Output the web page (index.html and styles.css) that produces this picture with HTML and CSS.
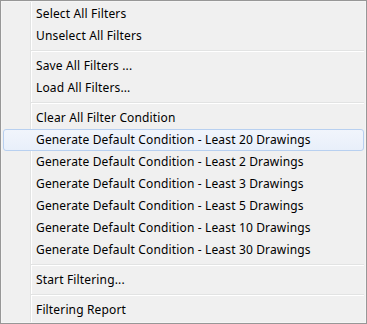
FILE: index.html
```html
<!DOCTYPE html>
<html lang="en">
<head>
  <meta charset="UTF-8">
  <title>Filter Menu</title>
  <link rel="stylesheet" href="styles.css">
</head>
<body>
  <div class="menu">
    <div class="menu-item">Select All Filters</div>
    <div class="menu-item">Unselect All Filters</div>
    <div class="menu-sep"></div>
    <div class="menu-item">Save All Filters ...</div>
    <div class="menu-item">Load All Filters...</div>
    <div class="menu-sep"></div>
    <div class="menu-item">Clear All Filter Condition</div>
    <div class="menu-item hover">Generate Default Condition - Least 20 Drawings</div>
    <div class="menu-item">Generate Default Condition - Least 2 Drawings</div>
    <div class="menu-item">Generate Default Condition - Least 3 Drawings</div>
    <div class="menu-item">Generate Default Condition - Least 5 Drawings</div>
    <div class="menu-item">Generate Default Condition - Least 10 Drawings</div>
    <div class="menu-item">Generate Default Condition - Least 30 Drawings</div>
    <div class="menu-sep"></div>
    <div class="menu-item">Start Filtering...</div>
    <div class="menu-sep"></div>
    <div class="menu-item">Filtering Report</div>
  </div>
</body>
</html>
```

FILE: styles.css
```css
  :root {
    --menu-bg: #F0F0F0;
    --menu-border: #979797;
    --line-dark: #E2E3E3;
    --text-base: #000000;
  }
  * {
    box-sizing: border-box;
  }
  html, body {
    margin: 0;
    padding: 0;
  }
  body {
    font-family: "Noto Sans", "Open Sans", sans-serif;
    font-size: 12px;
    letter-spacing: 0.15px;
    color: var(--text-base);
  }
  .menu {
    width: 367px;
    height: 324px;
    border: 1px solid var(--menu-border);
    padding: 2px;
    background-color: var(--menu-bg);
    background-image: linear-gradient(to right,
      transparent 29px, var(--line-dark) 29px, var(--line-dark) 30px,
      #FFFFFF 30px, #FFFFFF 31px, transparent 31px);
    box-shadow: inset 1px 1px 0 #F5F5F5, inset -1px -1px 0 #F5F5F5;
  }
  .menu-item {
    height: 22px;
    line-height: 20px;
    padding-left: 32px;
    white-space: nowrap;
    border: 1px solid transparent;
    border-radius: 3px;
  }
  .menu-item.hover {
    border-color: #B8D0F0;
    background: linear-gradient(to bottom, #F1F5FC, #E8EFFA);
  }
  .menu-sep {
    height: 8px;
    margin-left: 28px;
    padding-top: 3px;
  }
  .menu-sep::before {
    content: "";
    display: block;
    height: 1px;
    background: var(--line-dark);
    border-bottom: 1px solid #FFFFFF;
    box-sizing: content-box;
  }
```
